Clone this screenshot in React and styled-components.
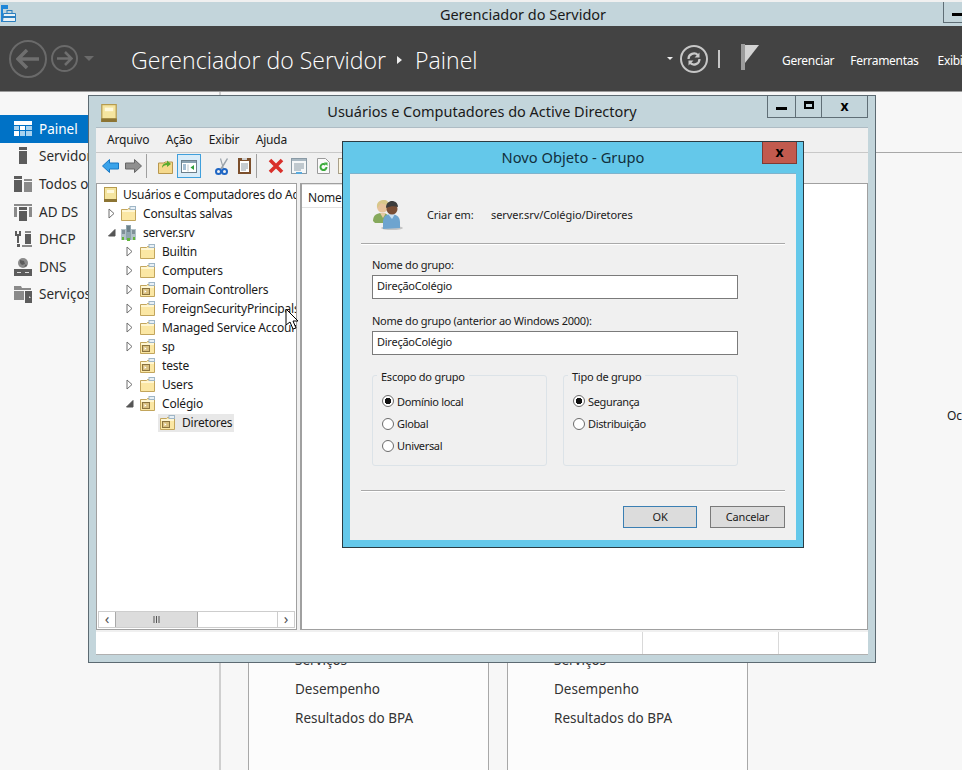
import styled, { createGlobalStyle } from 'styled-components';

const Global = createGlobalStyle`
  html, body { margin: 0; padding: 0; background: #f6f6f6; }
  body { font-family: "Noto Sans", "Open Sans", sans-serif; overflow: hidden; }
  * { box-sizing: border-box; }
`;

const NAV = [
  { label: 'Painel', icon: 'grid', active: true },
  { label: 'Servidor', icon: 'tower' },
  { label: 'Todos o', icon: 'all' },
  { label: 'AD DS', icon: 'adds' },
  { label: 'DHCP', icon: 'dhcp' },
  { label: 'DNS', icon: 'dns' },
  { label: 'Serviços', icon: 'files' },
];

const TREE = [
  { label: 'Consultas salvas', level: 0, arrow: 'closed', kind: 'plain' },
  { label: 'server.srv', level: 0, arrow: 'open', kind: 'server' },
  { label: 'Builtin', level: 1, arrow: 'closed', kind: 'plain' },
  { label: 'Computers', level: 1, arrow: 'closed', kind: 'plain' },
  { label: 'Domain Controllers', level: 1, arrow: 'closed', kind: 'ou' },
  { label: 'ForeignSecurityPrincipals', level: 1, arrow: 'closed', kind: 'plain' },
  { label: 'Managed Service Accounts', level: 1, arrow: 'closed', kind: 'plain' },
  { label: 'sp', level: 1, arrow: 'closed', kind: 'ou' },
  { label: 'teste', level: 1, kind: 'ou' },
  { label: 'Users', level: 1, arrow: 'closed', kind: 'plain' },
  { label: 'Colégio', level: 1, arrow: 'open', kind: 'ou' },
  { label: 'Diretores', level: 2, kind: 'ou', selected: true },
];

function NavIcon({ name, active }) {
  const c = active ? '#fff' : '#5c5c5c';
  const l = active ? '#a9d3ef' : '#8a8a8a';
  if (name === 'grid') return (
    <svg width="18" height="16" viewBox="0 0 18 16">
      <rect width="18" height="4" fill={c} />
      <rect y="5" width="5" height="4" fill={l} /><rect x="6" y="5" width="5" height="4" fill={c} /><rect x="12" y="5" width="6" height="4" fill={l} />
      <rect y="10" width="5" height="5" fill={c} /><rect x="6" y="10" width="5" height="5" fill={l} /><rect x="12" y="10" width="6" height="5" fill={l} />
    </svg>
  );
  if (name === 'tower') return (
    <svg width="18" height="18" viewBox="0 0 18 18">
      <rect x="5" y="0" width="8" height="3" fill={c} /><rect x="5" y="4" width="8" height="13" fill={c} />
    </svg>
  );
  if (name === 'all') return (
    <svg width="18" height="16" viewBox="0 0 18 16">
      <rect x="0" y="0" width="8" height="3" fill={c} /><rect x="0" y="4" width="8" height="12" fill={c} />
      <rect x="10" y="3" width="8" height="2" fill={l} /><rect x="10" y="6" width="8" height="10" fill={l} />
    </svg>
  );
  if (name === 'adds') return (
    <svg width="18" height="18" viewBox="0 0 18 18">
      <rect x="0" y="1" width="18" height="2" fill={l} /><rect x="0" y="4" width="3" height="10" fill={l} /><rect x="15" y="4" width="3" height="10" fill={l} />
      <rect x="5" y="4" width="8" height="3" fill={c} /><rect x="5" y="8" width="8" height="10" fill={c} />
    </svg>
  );
  if (name === 'dhcp') return (
    <svg width="18" height="18" viewBox="0 0 18 18">
      <path d="M1 1h2v3h2V1h2v5H5v7H3V6H1z" fill={c} />
      <rect x="11" y="1" width="6" height="2" fill={l} /><rect x="11" y="4" width="6" height="10" fill={c} />
      <rect x="8" y="15" width="10" height="2" fill={l} /><rect x="3" y="14" width="3" height="3" fill={c} />
    </svg>
  );
  if (name === 'dns') return (
    <svg width="18" height="18" viewBox="0 0 18 18">
      <circle cx="9" cy="5" r="5" fill={l} /><path d="M6 2l4 1 1 3-3 1-2-2zM12 6l1 2-3 1z" fill={c} />
      <rect x="0" y="11" width="18" height="7" fill={c} /><rect x="3" y="14" width="4" height="1" fill="#ddd" /><rect x="11" y="14" width="4" height="1" fill="#ddd" />
    </svg>
  );
  return (
    <svg width="18" height="17" viewBox="0 0 18 17">
      <path d="M0 0h7l1 2h9v2H0z" fill={l} /><rect y="5" width="10" height="9" fill={l} />
      <path d="M11 5h7v12h-7z" fill={c} /><path d="M15 10l2 2h-2z" fill="#ddd" />
    </svg>
  );
}

function FolderIcon({ kind }) {
  return (
    <svg width="15" height="15" viewBox="0 0 15 15">
      <path d="M.5 3.500V14.500h14V2.500H7.500l-1 1z" fill="#fbe7a4" stroke="#c2a55c" />
      <rect x="1" y="4" width="13" height="2" fill="#fff6d2" />
      <rect x="9" y=".5" width="5.500" height="3" fill="#e8f0f6" stroke="#9fb6c6" />
      {kind === 'ou' && <>
        <rect x="2.500" y="6.500" width="7" height="6" fill="#d9c080" stroke="#8b7440" />
        <path d="M4.500 8l2 1.500-2 1.500z" fill="#fff" />
      </>}
    </svg>
  );
}

function ServerIcon() {
  return (
    <svg width="15" height="16" viewBox="0 0 15 16">
      <rect x="5" y="0" width="5" height="15" fill="#8ea4ad" />
      <rect x="0" y="4" width="5" height="11" fill="#b3c2c8" />
      <rect x="10" y="4" width="5" height="11" fill="#b3c2c8" />
      <path d="M1 6h3M1 8h3M6 2h3M6 4h3M6 6h3M11 6h3M11 8h3" stroke="#4e6069" />
      <rect x="1" y="12" width="2" height="3" fill="#63b53a" />
      <rect x="6" y="13" width="3" height="3" fill="#63b53a" />
      <rect x="12" y="12" width="2" height="3" fill="#63b53a" />
    </svg>
  );
}

function BookIcon({ size = 15 }) {
  return (
    <svg width={size - 2} height={size} viewBox="0 0 13 15">
      <rect width="13" height="15" fill="#b69b4d" />
      <rect x="1" y="1" width="11" height="11" fill="#f5e5a0" />
      <rect x="3" y="3" width="7" height="3" fill="#fff9dc" />
      <rect y="12" width="13" height="3" fill="#8c7433" />
    </svg>
  );
}

function UsersIcon() {
  return (
    <svg width="32" height="32" viewBox="0 0 32 32">
      <ellipse cx="20" cy="30" rx="11" ry="2" fill="#c4c4c4" />
      <path d="M1 23c0-6 4-8 9-8s8 3 8 8v2H3z" fill="#86a95c" />
      <path d="M8 15l3 5 3-5z" fill="#e5c9a4" />
      <circle cx="10.500" cy="9" r="5.500" fill="#e6c29b" />
      <path d="M5 10c-1-7 4-8 7-8s5 2 5 5c-3 0-6-1-8-2-1 2-2 3-4 5z" fill="#d8c78a" />
      <path d="M11 31v-7c0-6 4-8 8-8s9 2 9 8v6z" fill="#6ea4cf" />
      <path d="M16 16l4 5 3-5z" fill="#c9e0f2" />
      <circle cx="20" cy="11" r="5.500" fill="#7a4f36" />
      <path d="M14 10c0-5 3-7 6-7s6 2 6 6c-3-1-8-1-12 1z" fill="#3d3d3d" />
    </svg>
  );
}

function Toolbar() {
  return (
    <ToolRow>
      <ToolSlot $w={23}>
        <svg width="17" height="14" viewBox="0 0 17 14"><path d="M.5 7L7.500.5v3.500h9v6h-9v3.500z" fill="#3aa3ea" stroke="#1878c4" /></svg>
      </ToolSlot>
      <ToolSlot $w={21}>
        <svg width="17" height="14" viewBox="0 0 17 14"><path d="M16.500 7L9.500.5v3.500h-9v6h9v3.500z" fill="#8f8f8f" stroke="#666" /></svg>
      </ToolSlot>
      <ToolSlot $w={12}><ToolSep /></ToolSlot>
      <ToolSlot $w={19}>
        <svg width="15" height="15" viewBox="0 0 15 15">
          <path d="M.5 4V14.500h14V3H7l-1 1z" fill="#f5d98d" stroke="#b8974e" />
          <path d="M4 9c0-4 3-5 5-5V1.500L13 5 9 8V6C7 6 5 7 4 9z" fill="#58ab2f" />
        </svg>
      </ToolSlot>
      <ToolSlot $w={38}>
        <ActiveTool>
          <svg width="16" height="13" viewBox="0 0 16 13">
            <rect x=".5" y=".5" width="15" height="12" fill="#fff" stroke="#6d7f8b" />
            <rect x="1" y="1" width="14" height="2" fill="#8ba3b3" />
            <path d="M2 5h3M2 7h3M2 9h3" stroke="#4b7fa8" />
            <path d="M7 4.500v7" stroke="#b9c5cd" />
            <path d="M13 5v5L9.500 7.500z" fill="#2e9e3a" />
          </svg>
        </ActiveTool>
      </ToolSlot>
      <ToolSlot $w={23}>
        <svg width="14" height="17" viewBox="0 0 14 17">
          <path d="M12 0L5 11h2L13 1zM5 1l3 10h1L6 0z" fill="#9aa3ab" />
          <circle cx="3.500" cy="13.500" r="2.500" fill="none" stroke="#1f66c4" strokeWidth="2" />
          <circle cx="9.500" cy="13.500" r="2.500" fill="none" stroke="#1f66c4" strokeWidth="2" />
        </svg>
      </ToolSlot>
      <ToolSlot $w={18}>
        <svg width="13" height="16" viewBox="0 0 13 16">
          <rect width="13" height="16" fill="#7c4f2c" />
          <rect x="2" y="3" width="9" height="11" fill="#fff" />
          <rect x="4" y="0" width="5" height="2" fill="#ccc" />
          <path d="M3 6h7M3 8h7M3 10h7M3 12h5" stroke="#8c9aa5" />
        </svg>
      </ToolSlot>
      <ToolSlot $w={12}><ToolSep /></ToolSlot>
      <ToolSlot $w={23}>
        <svg width="16" height="16" viewBox="0 0 16 16"><path d="M2 2l12 12M14 2L2 14" stroke="#d9302b" strokeWidth="3.600" /></svg>
      </ToolSlot>
      <ToolSlot $w={26}>
        <svg width="16" height="16" viewBox="0 0 16 16">
          <rect x=".5" y=".5" width="15" height="15" fill="#f5f7f8" stroke="#8a9aa5" />
          <rect x="1" y="1" width="14" height="2" fill="#a9b8c2" />
          <path d="M3 6h10M3 8h10M3 10h10M3 12h7" stroke="#8a9aa5" />
          <rect x="5" y="14" width="6" height="2" fill="#58a9dc" />
        </svg>
      </ToolSlot>
      <ToolSlot $w={21}>
        <svg width="13" height="16" viewBox="0 0 13 16">
          <path d="M.5.5h8l4 4v11H.5z" fill="#fafafa" stroke="#9a9a9a" />
          <path d="M9.500 9a3 3 0 1 1-1-2.200" fill="none" stroke="#3cab3c" strokeWidth="2" />
          <path d="M7 4.500h3.500V8z" fill="#3cab3c" />
        </svg>
      </ToolSlot>
      <ToolSlot $w={15}>
        <svg width="13" height="16" viewBox="0 0 13 16"><rect x=".5" y=".5" width="12" height="15" fill="#fdf6df" stroke="#a9a08a" /></svg>
      </ToolSlot>
    </ToolRow>
  );
}

function TreeArrow({ open }) {
  if (open) return (
    <svg width="9" height="9" viewBox="0 0 9 9"><path d="M8 1.500V8H1.500z" fill="#555" stroke="#555" /></svg>
  );
  return (
    <svg width="7" height="11" viewBox="0 0 7 11"><path d="M1 1l5 4.500L1 10z" fill="#fff" stroke="#6f6f6f" /></svg>
  );
}

function Radio({ label, checked }) {
  return (
    <RadioRow>
      <RadioDot $checked={checked} />
      {label}
    </RadioRow>
  );
}

export default function App() {
  return (
    <Page>
      <Global />
      <TopStrip />
      <AppTitle>
        <AppIcon>
          <svg width="16" height="18" viewBox="0 0 16 18">
            <rect x="1" y="0" width="7" height="4" fill="#1f86d8" />
            <rect x="1" y="4" width="2" height="13" fill="#1f86d8" />
            <path d="M3.500 8.500h12v8H2.500z" fill="#e9f2f7" stroke="#2b7fbf" />
            <rect x="7" y="5.500" width="5" height="3" fill="none" stroke="#2b7fbf" />
            <rect x="3" y="11" width="12" height="2" fill="#2b7fbf" />
          </svg>
        </AppIcon>
        Gerenciador do Servidor
        <WinMin><i /></WinMin>
      </AppTitle>
      <Header>
        <NavButtons>
          <CircleButton $size={38}>
            <svg width="24" height="20" viewBox="0 0 24 20"><path d="M11 1L2 10l9 9M2 10h21" fill="none" stroke="#6f6f6f" strokeWidth="3.500" /></svg>
          </CircleButton>
          <CircleButton $size={27}>
            <svg width="17" height="15" viewBox="0 0 17 15"><path d="M9 1l6.500 6.500L9 14M15 7.500H1" fill="none" stroke="#6f6f6f" strokeWidth="2.500" /></svg>
          </CircleButton>
          <Caret $color="#6a6a6a" $size={5} />
        </NavButtons>
        <Crumb>
          Gerenciador do Servidor
          <CrumbArrow />
          Painel
        </Crumb>
        <HeaderRight>
          <Caret $color="#eee" $size={3.5} />
          <RefreshCircle>
            <svg width="16" height="16" viewBox="0 0 16 16">
              <path d="M2.500 8a5.500 5.500 0 0 1 9.500-3.800M13.500 8A5.500 5.500 0 0 1 4 11.800" fill="none" stroke="#c9c9c9" strokeWidth="2.200" />
              <path d="M13.500 1.500v5h-5zM2.500 14.500v-5h5z" fill="#c9c9c9" />
            </svg>
          </RefreshCircle>
          <HeaderBar />
          <Flag width="20" height="26" viewBox="0 0 20 26">
            <rect x="1" y="0" width="4" height="26" fill="#9c9c9c" />
            <path d="M5 1h14L5 19z" fill="#d3d3d3" />
          </Flag>
          <HeaderMenu>
            <span>Gerenciar</span>
            <span>Ferramentas</span>
            <span>Exibir</span>
          </HeaderMenu>
        </HeaderRight>
      </Header>
      <Body>
        <Sidebar>
          {NAV.map(n => (
            <NavItem key={n.label} $active={n.active}>
              <NavIconBox><NavIcon name={n.icon} active={n.active} /></NavIconBox>
              {n.label}
            </NavItem>
          ))}
        </Sidebar>
        <Content>
          <Rule />
          <Cards>
            {[0, 1].map(i => (
              <Card key={i}>
                <span>Serviços</span>
                <span>Desempenho</span>
                <span>Resultados do BPA</span>
              </Card>
            ))}
          </Cards>
          <Edge>Oc</Edge>
        </Content>
      </Body>

      <AdWindow>
        <AdTitle>
          <BookSlot><BookIcon size={18} /></BookSlot>
          Usuários e Computadores do Active Directory
          <WinButtons>
            <WinButton $w={29}><i /></WinButton>
            <WinButton $w={27}><b /></WinButton>
            <WinButton $w={47}>x</WinButton>
          </WinButtons>
        </AdTitle>
        <Client>
          <Menu>
            <span>Arquivo</span>
            <span>Ação</span>
            <span>Exibir</span>
            <span>Ajuda</span>
          </Menu>
          <Toolbar />
          <Panes>
            <TreePane>
              <TreeScroll>
                <TreeRoot><BookIcon />Usuários e Computadores do Active Directory</TreeRoot>
                {TREE.map(t => (
                  <TreeRow key={t.label} $level={t.level}>
                    <Twisty $level={t.level}>{t.arrow && <TreeArrow open={t.arrow === 'open'} />}</Twisty>
                    <TreeItem $selected={t.selected}>
                      {t.kind === 'server' ? <ServerIcon /> : <FolderIcon kind={t.kind} />}
                      {t.label}
                    </TreeItem>
                  </TreeRow>
                ))}
              </TreeScroll>
              <HScroll>
                <ScrollEnd>‹</ScrollEnd>
                <ScrollThumb>
                  <svg width="7" height="7" viewBox="0 0 7 7"><path d="M1 0v7M3.500 0v7M6 0v7" stroke="#555" /></svg>
                </ScrollThumb>
                <ScrollTrack />
                <ScrollEnd>›</ScrollEnd>
              </HScroll>
            </TreePane>
            <ListPane>
              <ColHead>Nome</ColHead>
            </ListPane>
          </Panes>
          <Status>
            <StatusCell $w={136} />
            <StatusCell $w={90} />
          </Status>
        </Client>
        <Cursor>
          <svg width="14" height="22" viewBox="0 0 14 22">
            <path d="M1 1v16l4-3 3 7 3-1-3-7h5z" fill="#fff" stroke="#000" />
          </svg>
        </Cursor>
      </AdWindow>

      <Dialog>
        <DialogTitle>
          Novo Objeto - Grupo
          <CloseRed>x</CloseRed>
        </DialogTitle>
        <DialogClient>
          <CreateRow>
            <UsersIcon />
            <CreateLabel>Criar em:</CreateLabel>
            <span>server.srv/Colégio/Diretores</span>
          </CreateRow>
          <Divider />
          <Field $top={11}>
            <FieldLabel>Nome do grupo:</FieldLabel>
            <TextBox>DireçãoColégio</TextBox>
          </Field>
          <Field $top={13}>
            <FieldLabel>Nome do grupo (anterior ao Windows 2000):</FieldLabel>
            <TextBox>DireçãoColégio</TextBox>
          </Field>
          <Groups>
            <GroupBox>
              <Legend>Escopo do grupo</Legend>
              <Radio label="Domínio local" checked />
              <Radio label="Global" />
              <Radio label="Universal" />
            </GroupBox>
            <GroupBox>
              <Legend>Tipo de grupo</Legend>
              <Radio label="Segurança" checked />
              <Radio label="Distribuição" />
            </GroupBox>
          </Groups>
          <Divider />
          <Buttons>
            <Button $primary>OK</Button>
            <Button>Cancelar</Button>
          </Buttons>
        </DialogClient>
      </Dialog>
    </Page>
  );
}

const Page = styled.div`
  position: relative;
  width: 962px;
  height: 770px;
  overflow: hidden;
  display: flex;
  flex-direction: column;
  font-size: 12px;
  letter-spacing: -0.2px;
  color: #1a1a1a;
`;

const TopStrip = styled.div`
  height: 2px;
  background: #f0f0f0;
`;

const AppTitle = styled.div`
  position: relative;
  height: 24px;
  background: #c3d5db;
  display: flex;
  align-items: center;
  justify-content: center;
  font-size: 14.5px;
  letter-spacing: 0;
  padding-left: 84px;
`;

const AppIcon = styled.div`
  position: absolute;
  left: 0;
  top: 3px;
  display: flex;
`;

const WinMin = styled.div`
  position: absolute;
  left: 943px;
  top: 0;
  width: 30px;
  height: 21px;
  border: 1px solid #5f6e76;
  border-top: 0;
  i {
    position: absolute;
    left: 8px;
    top: 11px;
    width: 12px;
    height: 3px;
    background: #000;
  }
`;

const Header = styled.header`
  height: 66px;
  background: #434343;
  border-bottom: 1px solid #9a9a9a;
  display: flex;
  align-items: center;
  color: #fff;
`;

const NavButtons = styled.div`
  width: 131px;
  padding-left: 9px;
  display: flex;
  align-items: center;
  gap: 4px;
`;

const CircleButton = styled.div`
  width: ${p => p.$size}px;
  height: ${p => p.$size}px;
  border: 2px solid #6a6a6a;
  border-radius: 50%;
  display: flex;
  align-items: center;
  justify-content: center;
  svg { flex: none; }
`;

const Caret = styled.div`
  flex: none;
  width: 0;
  height: 0;
  margin-left: ${p => p.$size === 5 ? '2px' : '0'};
  border-left: ${p => p.$size}px solid transparent;
  border-right: ${p => p.$size}px solid transparent;
  border-top: ${p => p.$size}px solid ${p => p.$color};
`;

const Crumb = styled.div`
  display: flex;
  align-items: center;
  padding-top: 3px;
  font-family: "Open Sans", sans-serif;
  font-weight: 300;
  font-size: 23.1px;
  letter-spacing: 0;
  white-space: nowrap;
`;

const CrumbArrow = styled.i`
  width: 0;
  height: 0;
  margin: 0 13px 0 11px;
  border-top: 4px solid transparent;
  border-bottom: 4px solid transparent;
  border-left: 5px solid #eee;
`;

const HeaderRight = styled.div`
  margin-left: auto;
  display: flex;
  align-items: center;
  flex: none;
  width: 295px;
`;

const RefreshCircle = styled.div`
  flex: none;
  width: 28px;
  height: 28px;
  margin-left: 7px;
  border: 2px solid #c6c6c6;
  border-radius: 50%;
  display: flex;
  align-items: center;
  justify-content: center;
  svg { flex: none; }
`;

const HeaderBar = styled.div`
  flex: none;
  width: 2px;
  height: 18px;
  margin: 0 20px 0 10px;
  background: #c6c6c6;
`;

const Flag = styled.svg`
  flex: none;
  margin-bottom: 4px;
`;

const HeaderMenu = styled.div`
  flex: none;
  display: flex;
  gap: 16px;
  margin-left: 22px;
  padding-top: 3px;
  font-size: 12px;
  letter-spacing: -0.3px;
  white-space: nowrap;
  span:last-child { margin-left: 3px; }
`;

const Body = styled.div`
  flex: 1;
  display: flex;
  min-height: 0;
`;

const Sidebar = styled.nav`
  width: 221px;
  padding-top: 23px;
  border-right: 2px solid #cfcfcf;
  background: #f7f7f7;
  flex: none;
`;

const NavItem = styled.div`
  height: 27.6px;
  display: flex;
  align-items: center;
  gap: 7px;
  padding-left: 14px;
  font-size: 13.5px;
  letter-spacing: 0;
  background: ${p => p.$active ? '#0072c6' : 'transparent'};
  color: ${p => p.$active ? '#fff' : '#2b2b2b'};
`;

const NavIconBox = styled.span`
  width: 18px;
  display: flex;
  justify-content: center;
`;

const Content = styled.main`
  position: relative;
  flex: 1;
  background: #f7f7f7;
  padding-top: 60px;
`;

const Rule = styled.div`
  height: 1px;
  margin-left: 60px;
  background: #a8a8a8;
`;

const Cards = styled.div`
  display: flex;
  gap: 18px;
  margin-left: 27px;
  height: 700px;
`;

const Card = styled.div`
  width: 241px;
  height: 700px;
  padding: 497px 0 0 46px;
  background: #fcfcfc;
  border: 1px solid #a8a8a8;
  border-bottom: 0;
  display: flex;
  flex-direction: column;
  gap: 10px;
  font-size: 13.5px;
  letter-spacing: 0;
  color: #333;
  span { height: 19px; line-height: 19px; }
`;

const Edge = styled.div`
  position: absolute;
  left: 726px;
  top: 315px;
  font-size: 12px;
`;

const AdWindow = styled.section`
  position: absolute;
  left: 88px;
  top: 95px;
  width: 788px;
  height: 568px;
  background: #c3d5db;
  border: 1px solid #5c6a72;
  display: flex;
  flex-direction: column;
  padding: 0 7px 7px;
`;

const AdTitle = styled.div`
  height: 31px;
  flex: none;
  position: relative;
  display: flex;
  align-items: center;
  justify-content: center;
  font-size: 14.5px;
  letter-spacing: 0;
  padding-bottom: 1px;
`;

const BookSlot = styled.div`
  position: absolute;
  left: 5px;
  top: 8px;
  display: flex;
`;

const WinButtons = styled.div`
  position: absolute;
  right: 0;
  top: 0;
  height: 22px;
  display: flex;
`;

const WinButton = styled.div`
  width: ${p => p.$w}px;
  height: 22px;
  margin-left: -1px;
  border: 1px solid #5f6e76;
  border-top: 0;
  display: flex;
  align-items: center;
  justify-content: center;
  font-weight: 700;
  font-size: 14px;
  padding-bottom: 3px;
  color: #000;
  i { width: 11px; height: 3px; background: #000; margin-top: 6px; }
  b { width: 10px; height: 8px; border: 2px solid #000; border-top-width: 3px; }
`;

const Client = styled.div`
  flex: 1;
  min-height: 0;
  background: #f0f0f0;
  border-top: 1px solid #aebcc4;
  display: flex;
  flex-direction: column;
`;

const Menu = styled.div`
  height: 24px;
  flex: none;
  padding: 0 0 2px 11px;
  display: flex;
  align-items: center;
  gap: 16.5px;
  font-size: 12px;
`;

const ToolRow = styled.div`
  height: 31px;
  flex: none;
  padding: 0 0 4px 6px;
  border-top: 1px solid #c8c8c8;
  display: flex;
  align-items: center;
  svg { flex: none; }
`;

const ToolSlot = styled.div`
  width: ${p => p.$w}px;
  flex: none;
  display: flex;
  align-items: center;
`;

const ToolSep = styled.i`
  width: 1px;
  height: 24px;
  background: #9f9f9f;
`;

const ActiveTool = styled.div`
  width: 24px;
  height: 24px;
  background: #d9ecf9;
  border: 1px solid #3f9fdc;
  display: flex;
  align-items: center;
  justify-content: center;
`;

const Panes = styled.div`
  height: 447px;
  flex: none;
  display: flex;
  gap: 3px;
`;

const TreePane = styled.div`
  width: 201px;
  flex: none;
  background: #fff;
  border: 1px solid #a0a0a0;
  display: flex;
  flex-direction: column;
  min-height: 0;
`;

const TreeScroll = styled.div`
  flex: 1;
  overflow: hidden;
  padding: 1px 0 0 7px;
`;

const TreeRoot = styled.div`
  height: 19px;
  display: flex;
  align-items: center;
  gap: 6px;
  white-space: nowrap;
  svg { flex: none; }
`;

const TreeRow = styled.div`
  height: 19px;
  display: flex;
  align-items: center;
  white-space: nowrap;
  padding-left: ${p => [0, 18, 38][p.$level]}px;
`;

const Twisty = styled.span`
  width: 15px;
  flex: none;
  margin-right: ${p => p.$level === 0 ? 0 : 1}px;
  display: flex;
  align-items: center;
  justify-content: center;
`;

const TreeItem = styled.span`
  height: 18px;
  display: flex;
  align-items: center;
  gap: 7px;
  padding: 0 2px;
  background: ${p => p.$selected ? '#e8e8e8' : 'transparent'};
  svg { flex: none; }
`;

const HScroll = styled.div`
  height: 17px;
  flex: none;
  margin: 0 1px 1px;
  display: flex;
  border: 1px solid #cdcdcd;
`;

const ScrollEnd = styled.div`
  width: 16px;
  display: flex;
  align-items: center;
  justify-content: center;
  font-size: 15px;
  line-height: 1;
  padding-bottom: 3px;
  color: #555;
  background: #fff;
`;

const ScrollThumb = styled.div`
  width: 83px;
  background: #dcdcdc;
  border: 1px solid #a9a9a9;
  border-width: 0 1px;
  display: flex;
  align-items: center;
  justify-content: center;
`;

const ScrollTrack = styled.div`
  flex: 1;
  background: #fff;
  border-right: 1px solid #cdcdcd;
`;

const ListPane = styled.div`
  flex: 1;
  background: #fff;
  border: 1px solid #a0a0a0;
  border-left-width: 2px;
`;

const ColHead = styled.div`
  height: 24px;
  width: 80px;
  padding: 4px 0 0 6px;
  background: #fff;
  border-bottom: 1px solid #e2e2e2;
  border-top: 1px solid #e2e2e2;
`;

const Status = styled.div`
  margin-top: 2px;
  flex: 1;
  background: #fff;
  border-bottom: 1px solid #b0b0b0;
  display: flex;
  justify-content: flex-end;
`;

const StatusCell = styled.div`
  width: ${p => p.$w}px;
  border-left: 1px solid #d9d9d9;
`;

const Cursor = styled.div`
  position: absolute;
  left: 196px;
  top: 212px;
  display: flex;
`;

const Dialog = styled.section`
  position: absolute;
  left: 342px;
  top: 141px;
  width: 462px;
  height: 407px;
  background: #64c8ea;
  border: 1px solid #2b3b42;
  padding: 0 7px 7px;
  display: flex;
  flex-direction: column;
`;

const DialogTitle = styled.div`
  position: relative;
  height: 31px;
  flex: none;
  display: flex;
  align-items: center;
  justify-content: center;
  font-size: 14.7px;
  letter-spacing: 0;
  color: #12303d;
  padding-bottom: 2px;
`;

const CloseRed = styled.div`
  position: absolute;
  right: -1px;
  top: 0;
  width: 35px;
  height: 22px;
  background: #c25a4e;
  border: 1px solid #7f3a34;
  border-top: 0;
  display: flex;
  align-items: center;
  justify-content: center;
  padding-bottom: 3px;
  color: #000;
  font-weight: 700;
  font-size: 14px;
`;

const DialogClient = styled.div`
  flex: 1;
  background: #f0f0f0;
  border-top: 1px solid #7fb3cc;
  padding: 0 11px;
  font-size: 11px;
  letter-spacing: -0.08px;
  display: flex;
  flex-direction: column;
`;

const CreateRow = styled.div`
  height: 69px;
  flex: none;
  padding: 11px 0 0 11px;
  display: flex;
  align-items: center;
  color: #222;
  svg { flex: none; }
`;

const CreateLabel = styled.span`
  width: 64px;
  margin-left: 23px;
`;

const Divider = styled.div`
  height: 2px;
  flex: none;
  background: #a9a9a9;
  border-bottom: 1px solid #fff;
`;

const Field = styled.div`
  margin: ${p => p.$top}px 0 0 11px;
`;

const FieldLabel = styled.div`
  height: 17px;
  line-height: 17px;
  font-size: 11px;
  letter-spacing: -0.25px;
  white-space: nowrap;
`;

const TextBox = styled.div`
  width: 366px;
  height: 24px;
  margin-top: 2px;
  padding: 0 0 3px 4px;
  display: flex;
  align-items: center;
  background: #fff;
  border: 1px solid #7a7a7a;
  font-size: 11px;
  letter-spacing: -0.25px;
`;

const Groups = styled.div`
  margin: 20px 0 24px 11px;
  flex: none;
  display: flex;
  gap: 16px;
`;

const GroupBox = styled.div`
  position: relative;
  width: 175px;
  height: 91px;
  padding: 14px 0 0 9px;
  border: 1px solid #dce3e8;
  border-radius: 3px;
`;

const Legend = styled.span`
  position: absolute;
  left: 4px;
  top: -7px;
  padding: 0 4px;
  background: #f0f0f0;
  font-size: 11px;
  letter-spacing: -0.25px;
  line-height: 16px;
  white-space: nowrap;
`;

const RadioRow = styled.label`
  height: 22.4px;
  display: flex;
  align-items: center;
  gap: 3px;
  font-size: 11px;
  letter-spacing: -0.35px;
`;

const RadioDot = styled.i`
  width: 12px;
  height: 12px;
  flex: none;
  border-radius: 50%;
  border: 1px solid #6b6b6b;
  background: ${p => p.$checked ? 'radial-gradient(circle, #111 0, #111 3px, #fff 3.5px)' : '#fff'};
`;

const Buttons = styled.div`
  margin-top: 14px;
  display: flex;
  justify-content: flex-end;
  gap: 13px;
`;

const Button = styled.div`
  width: ${p => p.$primary ? 74 : 75}px;
  height: 22px;
  padding-bottom: 2px;
  display: flex;
  align-items: center;
  justify-content: center;
  background: #dcdcdc;
  border: 1px solid ${p => p.$primary ? '#3b7fb3' : '#7a7a7a'};
  font-size: 11px;
  letter-spacing: -0.2px;
`;
